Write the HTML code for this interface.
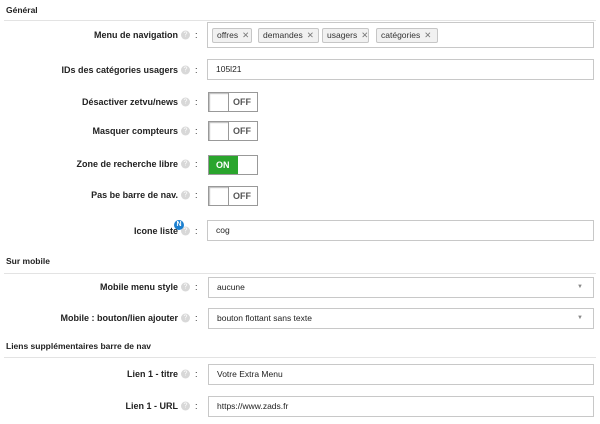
<!DOCTYPE html>
<html><head><meta charset="utf-8"><style>
*{box-sizing:border-box;margin:0;padding:0}
body{width:600px;height:424px;background:#fff;font-family:"Liberation Sans",Arial,sans-serif;color:#222;position:relative;overflow:hidden}
.h{position:absolute;left:6px;font-size:8.5px;font-weight:bold;color:#222}
.line{position:absolute;left:4px;right:4px;height:1px;background:#e3e3e3}
.lab{position:absolute;right:422px;font-size:9px;font-weight:bold;text-align:right;white-space:nowrap;transform:translateY(-50%)}
.q{position:absolute;left:181px;width:9px;height:9px;border-radius:50%;background:#d8d8d8;color:#fff;font-size:7px;text-align:center;line-height:9px;transform:translateY(-50%)}
.c{position:absolute;left:195px;font-size:9px;transform:translateY(-50%)}
.in{position:absolute;left:207px;width:387px;height:21px;border:1px solid #c8c8c8;font-size:8.5px;padding-left:8px;line-height:19px;color:#222;background:#fff}
.arrow{position:absolute;right:10px;top:0;font-size:6px;color:#888}
.tag{position:absolute;top:5px;height:15px;border:1px solid #c6c6c6;background:#f1f1f1;border-radius:2px;font-size:8.5px;line-height:13px;padding-left:4px;color:#333}
.tag b{font-weight:normal;color:#777;margin-left:4px}
.tg{position:absolute;left:208px;width:50px;height:20px;border:1px solid #999;background:#fff;font-size:9px;font-weight:bold}
.tg.off .k{position:absolute;left:0;top:0;width:20px;height:18px;border-right:1px solid #999;box-shadow:inset 1px 1px 1px #bbb}
.tg.off span{position:absolute;left:24px;top:4px;color:#555}
.tg.on{background:#fff}
.tg.on .g{position:absolute;left:0;top:0;width:29px;height:18px;background:#2aa52d;color:#fff;padding-left:7px;line-height:18px}
</style></head><body>
<div class="h" style="top:5px">Général</div>
<div class="line" style="top:20px"></div>

<div class="lab" style="top:35px">Menu de navigation</div><div class="q" style="top:35px">?</div><div class="c" style="top:35px">:</div>
<div class="in" style="top:22px;height:26px">
<div class="tag" style="left:4px;width:40px">offres<b>✕</b></div>
<div class="tag" style="left:50px;width:61px">demandes<b>✕</b></div>
<div class="tag" style="left:114px;width:47px">usagers<b>✕</b></div>
<div class="tag" style="left:168px;width:62px">catégories<b>✕</b></div>
</div>

<div class="lab" style="top:70px">IDs des catégories usagers</div><div class="q" style="top:70px">?</div><div class="c" style="top:70px">:</div>
<div class="in" style="top:59px">105l21</div>

<div class="lab" style="top:102px">Désactiver zetvu/news</div><div class="q" style="top:102px">?</div><div class="c" style="top:102px">:</div>
<div class="tg off" style="top:92px"><div class="k"></div><span>OFF</span></div>

<div class="lab" style="top:131px">Masquer compteurs</div><div class="q" style="top:131px">?</div><div class="c" style="top:131px">:</div>
<div class="tg off" style="top:121px"><div class="k"></div><span>OFF</span></div>

<div class="lab" style="top:164px">Zone de recherche libre</div><div class="q" style="top:164px">?</div><div class="c" style="top:164px">:</div>
<div class="tg on" style="top:155px"><div class="g">ON</div></div>

<div class="lab" style="top:195px">Pas be barre de nav.</div><div class="q" style="top:195px">?</div><div class="c" style="top:195px">:</div>
<div class="tg off" style="top:186px"><div class="k"></div><span>OFF</span></div>

<div class="lab" style="top:231px">Icone liste</div><div class="q" style="top:231px">?</div><div class="c" style="top:231px">:</div>
<div style="position:absolute;left:174px;top:220px;width:10px;height:10px;border-radius:50%;background:#1c7fcf;color:#fff;font-size:7px;font-weight:bold;text-align:center;line-height:10px">N</div>
<div class="in" style="top:220px">cog</div>

<div class="h" style="top:256px">Sur mobile</div>
<div class="line" style="top:273px"></div>

<div class="lab" style="top:287px">Mobile menu style</div><div class="q" style="top:287px">?</div><div class="c" style="top:287px">:</div>
<div class="in" style="top:277px;width:386px;left:208px">aucune<span class="arrow">▼</span></div>

<div class="lab" style="top:318px">Mobile : bouton/lien ajouter</div><div class="q" style="top:318px">?</div><div class="c" style="top:318px">:</div>
<div class="in" style="top:308px;width:386px;left:208px">bouton flottant sans texte<span class="arrow">▼</span></div>

<div class="h" style="top:341px">Liens supplémentaires barre de nav</div>
<div class="line" style="top:357px"></div>

<div class="lab" style="top:374px">Lien 1 - titre</div><div class="q" style="top:374px">?</div><div class="c" style="top:374px">:</div>
<div class="in" style="top:364px;width:386px;left:208px">Votre Extra Menu</div>

<div class="lab" style="top:406px">Lien 1 - URL</div><div class="q" style="top:406px">?</div><div class="c" style="top:406px">:</div>
<div class="in" style="top:396px;width:386px;left:208px">https://www.zads.fr</div>
</body></html>
